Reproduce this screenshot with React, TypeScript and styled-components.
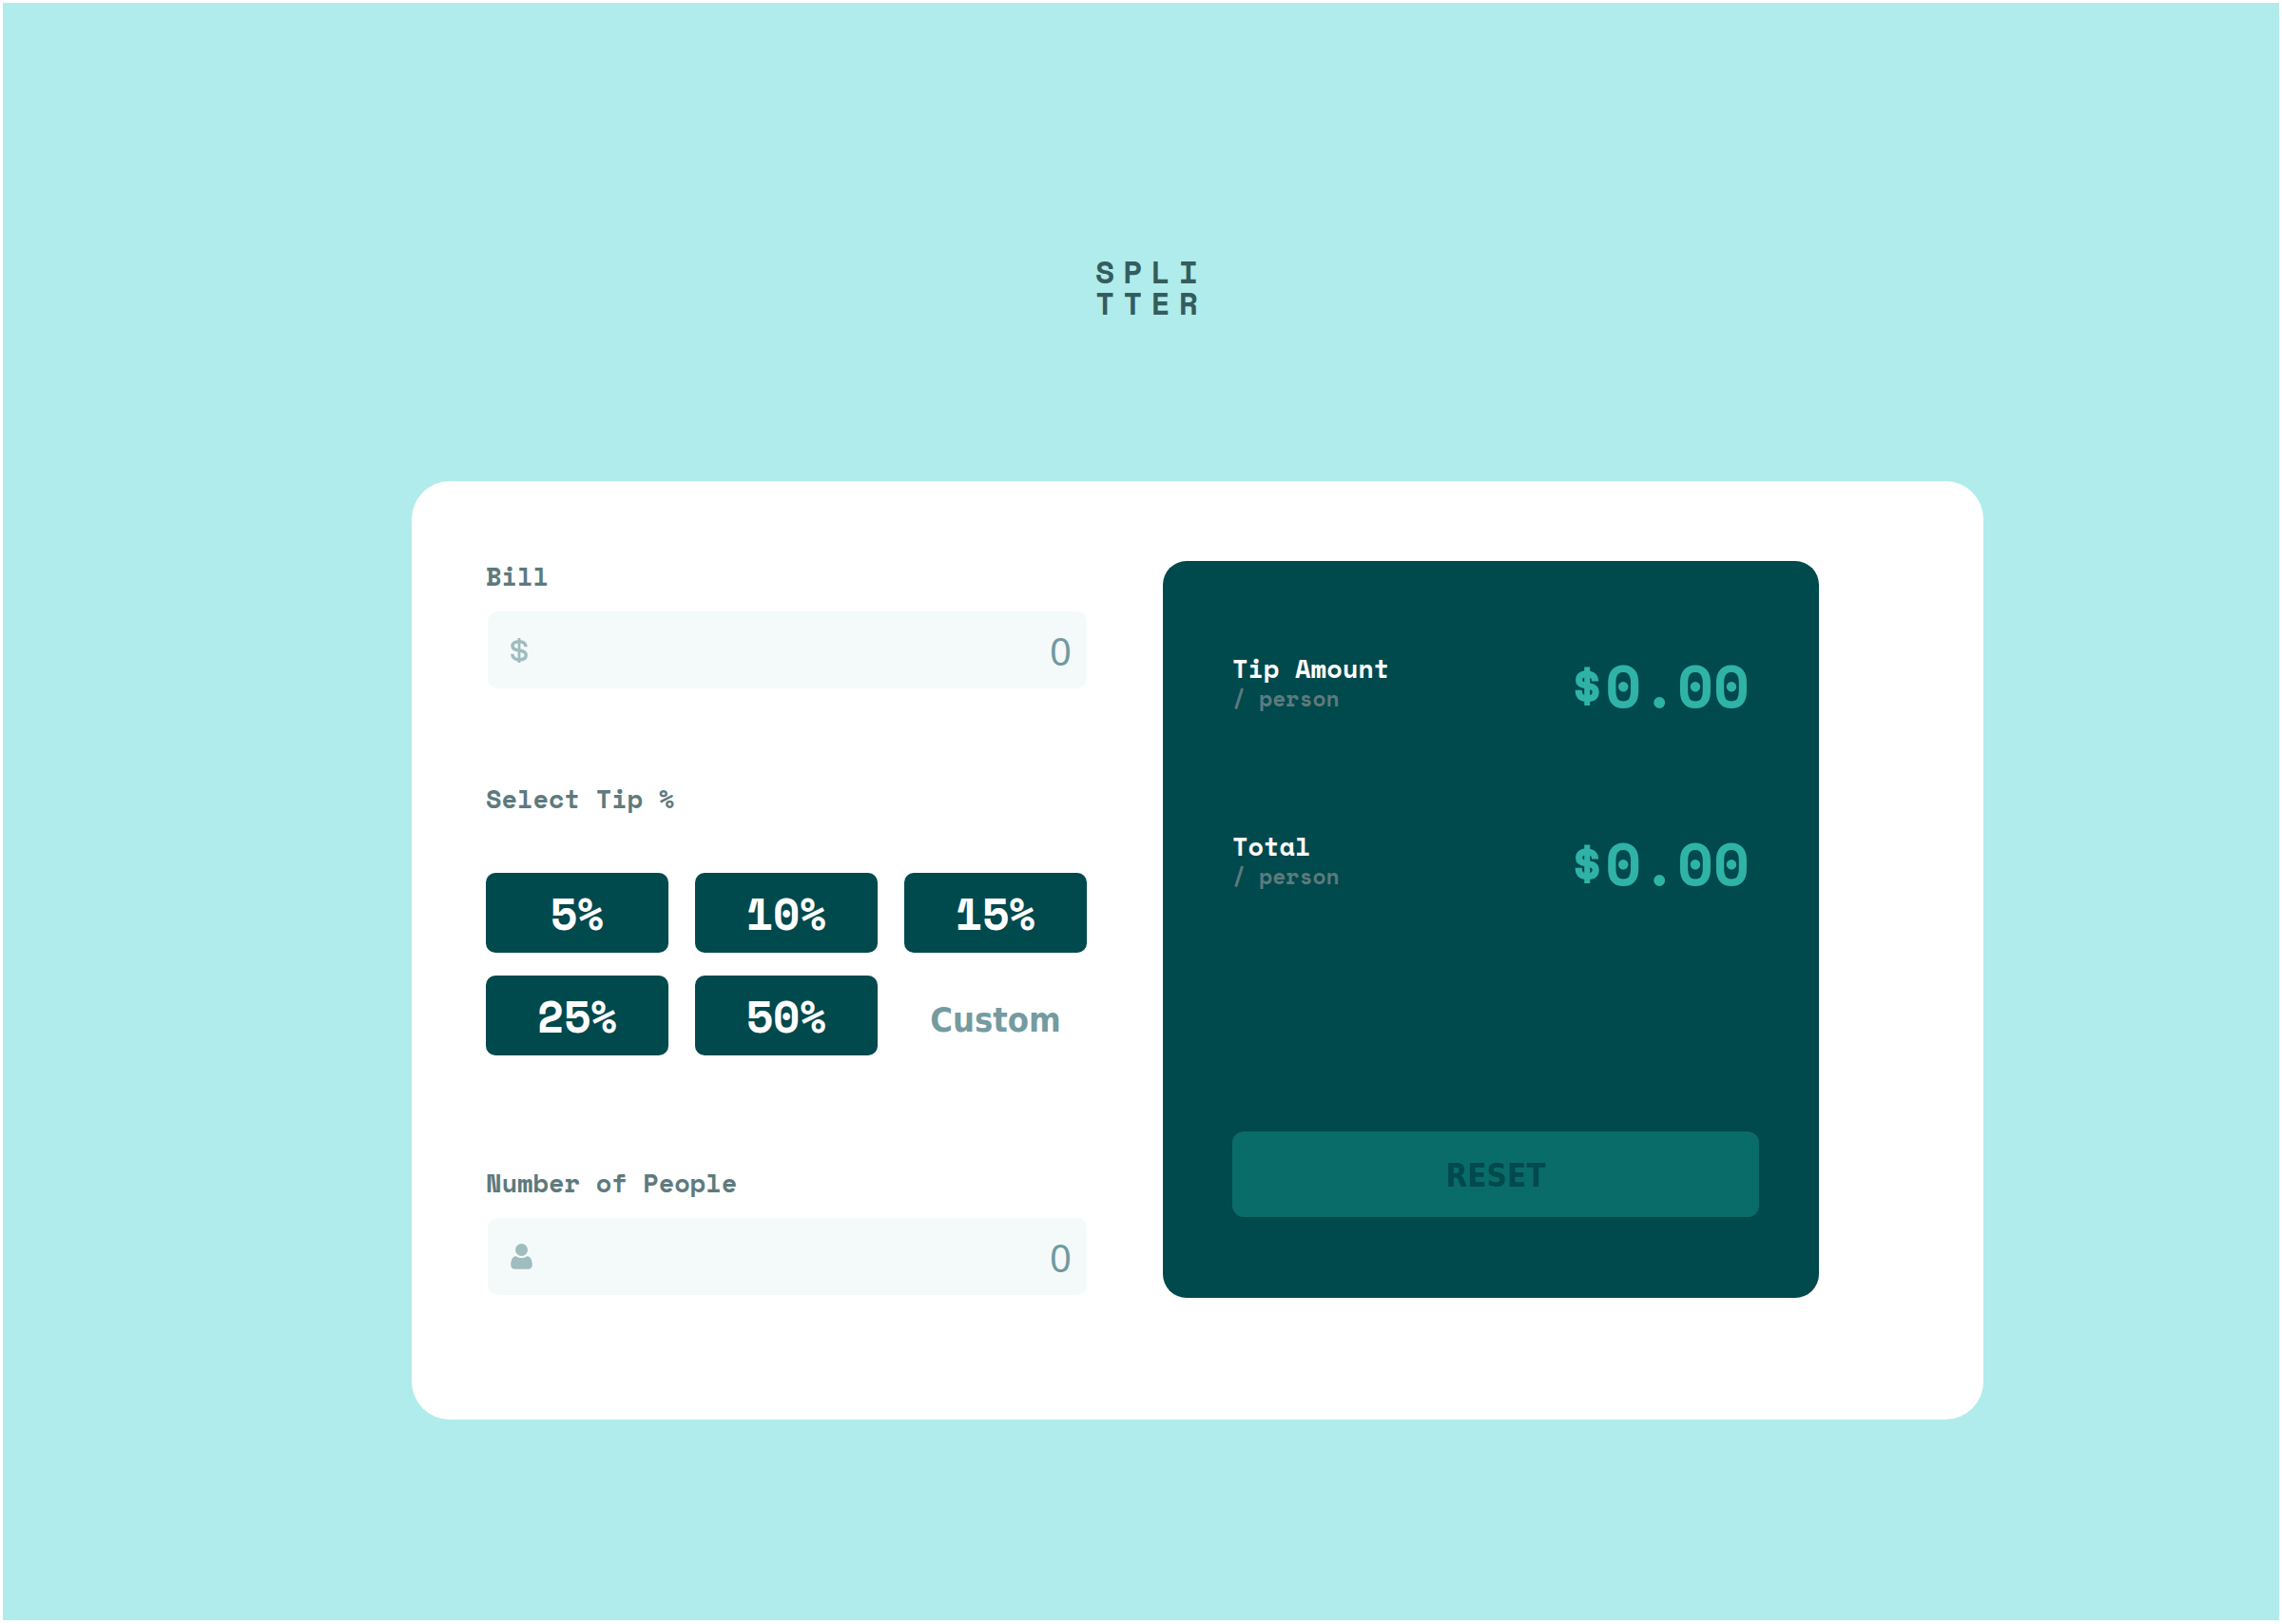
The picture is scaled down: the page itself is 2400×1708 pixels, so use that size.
import React, { useId, useState } from "react";
import styled, { createGlobalStyle } from "styled-components";

const mono = `"Space Mono", "DejaVu Sans Mono", "Liberation Mono", monospace`;
const sans = `Tahoma, "DejaVu Sans Condensed", "DejaVu Sans", sans-serif`;
const digits = `"Noto Sans", "Open Sans", sans-serif`;

const GlobalStyle = createGlobalStyle`
  *, *::before, *::after { box-sizing: border-box; }
  body { margin: 0; background: #fff; font-family: ${mono}; font-weight: 700; }
  button, input { font: inherit; border: 0; }
`;

const Page = styled.main`
  display: flex;
  flex-direction: column;
  min-height: calc(100vh - 7px);
  margin: 3px 3px 4px;
  padding: 266px 0 100px;
  background: #b0eceb;
`;

const Logo = styled.h1`
  align-self: center;
  margin: 0 0 171px;
  padding-left: 21px;
  color: #355c5e;
  font-size: 33px;
  line-height: 33px;
  letter-spacing: 9px;
`;

const LogoLine = styled.span`
  display: block;
`;

const Card = styled.section`
  display: grid;
  grid-template-columns: minmax(0, 632fr) minmax(0, 690fr);
  gap: 80px;
  margin: 0 311px 0 430px;
  padding: 84px 173px 128px 78px;
  border-radius: 40px;
  background: #fff;
`;

const Form = styled.form`
  display: flex;
  flex-direction: column;
  padding-bottom: 3px;
`;

const Field = styled.div`
  display: flex;
  flex-direction: column;
  gap: 20px;
`;

const Label = styled.label`
  color: #5e7a7d;
  font-size: 27px;
  line-height: 33px;
`;

const InputBox = styled.div`
  display: flex;
  align-items: center;
  height: 81px;
  margin-left: 2px;
  padding: 0 16px 0 24px;
  border-radius: 10px;
  background: #f4fafa;
  color: #9fbcbf;
`;

const NumberInput = styled.input`
  flex: 1;
  min-width: 0;
  padding: 2px 0 0;
  background: transparent;
  color: #7199a0;
  font-family: ${digits};
  font-weight: 400;
  font-size: 40px;
  text-align: right;
  outline: none;
  &::placeholder { color: #7199a0; opacity: 1; }
`;

const TipGroup = styled.fieldset`
  min-width: 0;
  margin: 100px 0 118px;
  padding: 0;
  border: 0;
`;

const TipLegend = styled.legend`
  padding: 0 0 61px;
  color: #5e7a7d;
  font-size: 27px;
  line-height: 33px;
`;

const TipGrid = styled.div`
  display: grid;
  grid-template-columns: repeat(3, minmax(0, 1fr));
  gap: 24px 28px;
`;

const TipButton = styled.button`
  height: 84px;
  border-radius: 10px;
  background: #00494d;
  color: #fff;
  font-size: 46px;
  cursor: pointer;
`;

const CustomTip = styled.input`
  width: 100%;
  min-width: 0;
  height: 84px;
  padding: 8px 0 0;
  background: transparent;
  font-family: ${sans};
  font-size: 36px;
  text-align: center;
  color: #759b9f;
  outline: none;
  &::placeholder { color: #759b9f; opacity: 1; }
`;

const Summary = styled.section`
  display: flex;
  flex-direction: column;
  padding: 95px 63px 85px 73px;
  border-radius: 25px;
  background: #00494d;
`;

const Result = styled.div`
  display: flex;
  justify-content: space-between;
  align-items: flex-start;
  height: 187px;
  padding-right: 10px;
`;

const ResultName = styled.div`
  color: #fff;
  font-size: 27px;
  line-height: 36px;
`;

const PerPerson = styled.div`
  color: #5e7a7d;
  font-size: 23px;
  line-height: 27px;
`;

const Amount = styled.output`
  color: #2fb3a6;
  font-size: 62px;
  line-height: 72px;
`;

const ResetButton = styled.button`
  height: 90px;
  margin-top: auto;
  padding: 2px 0 0;
  border-radius: 12px;
  background: #0a6c69;
  color: #00494d;
  font-family: ${sans};
  font-size: 33px;
`;

function DollarIcon() {
  return (
    <svg width="18" height="26" viewBox="0 0 18 26" fill="none" stroke="currentColor" strokeWidth="3.500" aria-hidden="true">
      <path d="M9 0v26" strokeWidth="2.800" />
      <path d="M16 9.300C16 5.700 13.200 3.800 9 3.800S2 5.600 2 8.400s2.600 4 7 4.600 7.200 1.700 7.200 4.900-3 4.800-7.200 4.800-7.200-2.200-7.200-6" />
    </svg>
  );
}

function PersonIcon() {
  return (
    <svg width="23" height="27" viewBox="0 0 23 27" fill="currentColor" aria-hidden="true">
      <circle cx="11.500" cy="6.500" r="6.500" />
      <path d="M5.500 13c1.600 1.400 3.700 2 6 2s4.400-.6 6-2c3.600.6 5.300 4.600 5.300 9.200 0 2.800-1.600 4.500-4.300 4.500h-14C1.800 26.700.2 25 .2 22.200.2 17.600 1.900 13.600 5.500 13z" />
    </svg>
  );
}

type NumberFieldProps = {
  label: string;
  icon: React.ReactNode;
  value: string;
  onChange: (value: string) => void;
};

function NumberField({ label, icon, value, onChange }: NumberFieldProps) {
  const id = useId();
  return (
    <Field>
      <Label htmlFor={id}>{label}</Label>
      <InputBox>
        {icon}
        <NumberInput
          id={id}
          inputMode="decimal"
          placeholder="0"
          value={value}
          onChange={(e) => onChange(e.target.value)}
        />
      </InputBox>
    </Field>
  );
}

function ResultRow({ name, amount }: { name: string; amount: number }) {
  return (
    <Result>
      <div>
        <ResultName>{name}</ResultName>
        <PerPerson>/ person</PerPerson>
      </div>
      <Amount>${amount.toFixed(2)}</Amount>
    </Result>
  );
}

const TIPS = [5, 10, 15, 25, 50];

export default function App() {
  const [bill, setBill] = useState("");
  const [people, setPeople] = useState("");
  const [custom, setCustom] = useState("");
  const [tip, setTip] = useState(0);

  const total = Number(bill) || 0;
  const count = Number(people) || 0;
  const rate = (Number(custom) || tip) / 100;
  const tipEach = count > 0 ? (total * rate) / count : 0;
  const totalEach = count > 0 ? (total * (1 + rate)) / count : 0;

  const reset = () => {
    setBill("");
    setPeople("");
    setCustom("");
    setTip(0);
  };

  return (
    <>
      <GlobalStyle />
      <Page>
        <Logo>
          <LogoLine>SPLI</LogoLine>
          <LogoLine>TTER</LogoLine>
        </Logo>
        <Card>
          <Form onSubmit={(e) => e.preventDefault()}>
            <NumberField label="Bill" icon={<DollarIcon />} value={bill} onChange={setBill} />
            <TipGroup>
              <TipLegend>Select Tip %</TipLegend>
              <TipGrid>
                {TIPS.map((value) => (
                  <TipButton key={value} type="button" onClick={() => setTip(value)}>
                    {value}%
                  </TipButton>
                ))}
                <CustomTip
                  aria-label="Custom tip"
                  placeholder="Custom"
                  value={custom}
                  onChange={(e) => setCustom(e.target.value)}
                />
              </TipGrid>
            </TipGroup>
            <NumberField label="Number of People" icon={<PersonIcon />} value={people} onChange={setPeople} />
          </Form>
          <Summary>
            <ResultRow name="Tip Amount" amount={tipEach} />
            <ResultRow name="Total" amount={totalEach} />
            <ResetButton type="button" onClick={reset}>RESET</ResetButton>
          </Summary>
        </Card>
      </Page>
    </>
  );
}
